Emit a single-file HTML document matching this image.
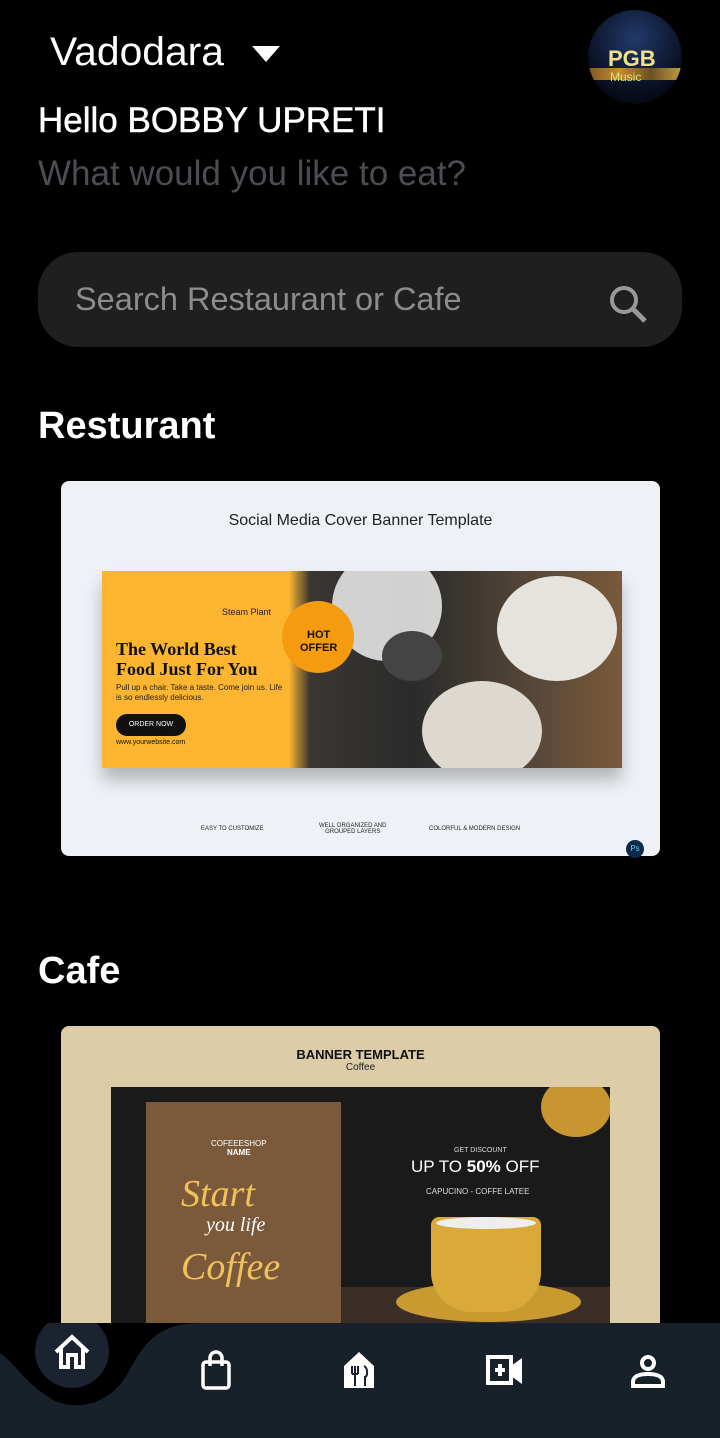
<!DOCTYPE html>
<html><head><meta charset="utf-8"><style>
*{margin:0;padding:0;box-sizing:border-box}
body{width:720px;height:1438px;background:#000;font-family:"Liberation Sans",sans-serif;position:relative;overflow:hidden;color:#fff}
.abs{position:absolute}
.t{white-space:nowrap;transform-origin:left top}
</style></head><body>
<div class="abs t" style="left:50px;top:30px;font-size:40px;transform:scaleX(1.02)">Vadodara</div>
<svg class="abs" style="left:252px;top:46px" width="28" height="18"><path d="M0 0H28L14 16Z" fill="#fff"/></svg>
<div class="abs" style="left:588px;top:10px;width:94px;height:94px;border-radius:50%;background:radial-gradient(circle at 50% 30%,#223a6a,#0b1226 60%,#000);overflow:hidden">
<div class="abs" style="left:0;top:58px;width:94px;height:12px;background:linear-gradient(90deg,#7a5a20,#c98c30,#6a5020,#c0a040)"></div>
<div class="abs" style="left:20px;top:36px;font-weight:bold;font-size:22px;color:#f1e28a">PGB</div>
<div class="abs" style="left:22px;top:60px;font-size:12px;color:#d8e47a">Music</div></div>
<div class="abs t" style="left:38px;top:101px;font-size:35px;-webkit-text-stroke:0.5px #fff">Hello BOBBY UPRETI</div>
<div class="abs t" style="left:38px;top:154px;font-size:35px;color:#4b4d52">What would you like to eat?</div>
<div class="abs" style="left:38px;top:252px;width:644px;height:95px;border-radius:40px;background:#1f1f1f"></div>
<div class="abs t" style="left:75px;top:281px;font-size:32.5px;color:#8c8c8c">Search Restaurant or Cafe</div>
<svg class="abs" style="left:606px;top:282px" width="44" height="44"><circle cx="18" cy="18" r="12" fill="none" stroke="#9a9a9a" stroke-width="4"/><path d="M27 27L39 39" stroke="#9a9a9a" stroke-width="5"/></svg>
<div class="abs t" style="left:38px;top:405px;font-size:38px;font-weight:bold">Resturant</div>
<div class="abs" style="left:61px;top:481px;width:599px;height:375px;border-radius:8px;background:#eef2f6">
<div class="abs" style="left:0;top:31px;width:599px;text-align:center;font-size:16px;color:#222">Social Media Cover Banner Template</div>
<div class="abs" style="left:41px;top:90px;width:520px;height:197px;background:linear-gradient(90deg,#fbb530 0 36%,#3a3632 40%,#2a2b2b 60%,#5b4a3a 85%,#7a5a3a);box-shadow:0 12px 16px rgba(0,0,0,.25);overflow:hidden">
<div class="abs" style="left:230px;top:-20px;width:110px;height:110px;border-radius:50%;background:#eee;opacity:.85"></div>
<div class="abs" style="left:395px;top:5px;width:120px;height:105px;border-radius:50%;background:#e6e2dc"></div>
<div class="abs" style="left:320px;top:110px;width:120px;height:100px;border-radius:50%;background:#ddd8d0"></div>
<div class="abs" style="left:280px;top:60px;width:60px;height:50px;border-radius:50%;background:#444"></div>
<div class="abs" style="left:180px;top:30px;width:72px;height:72px;border-radius:50%;background:#f59b10"></div>
<div class="abs" style="left:198px;top:58px;font-size:11px;font-weight:bold;color:#111;text-align:center;line-height:13px">HOT<br>OFFER</div>
<div class="abs" style="left:120px;top:36px;font-size:9px;color:#222">Steam Plant</div>
<div class="abs" style="left:14px;top:68px;font-family:'Liberation Serif',serif;font-weight:bold;font-size:18px;line-height:20px;color:#111">The World Best<br>Food Just For You</div>
<div class="abs" style="left:14px;top:112px;font-size:8px;color:#222;line-height:10px">Pull up a chair. Take a taste. Come join us. Life<br>is so endlessly delicious.</div>
<div class="abs" style="left:14px;top:143px;width:70px;height:22px;border-radius:11px;background:#111;color:#fff;font-size:7px;text-align:center;line-height:22px">ORDER NOW</div>
<div class="abs" style="left:14px;top:168px;font-size:7px;color:#111">www.yourwebsite.com</div></div>
<div class="abs" style="left:140px;top:345px;font-size:6px;color:#222">EASY TO CUSTOMIZE</div>
<div class="abs" style="left:258px;top:342px;font-size:6px;color:#222;text-align:center">WELL ORGANIZED AND<br>GROUPED LAYERS</div>
<div class="abs" style="left:368px;top:345px;font-size:6px;color:#222">COLORFUL &amp; MODERN DESIGN</div>
<div class="abs" style="left:565px;top:359px;width:18px;height:18px;border-radius:50%;background:#0b2a4a;color:#6cf;font-size:8px;text-align:center;line-height:18px">Ps</div>
</div>
<div class="abs t" style="left:38px;top:950px;font-size:38px;font-weight:bold">Cafe</div>
<div class="abs" style="left:61px;top:1026px;width:599px;height:310px;border-radius:8px 8px 0 0;background:#dccca8">
<div class="abs" style="left:0;top:21px;width:599px;text-align:center;font-size:13px;font-weight:bold;color:#111">BANNER TEMPLATE</div>
<div class="abs" style="left:0;top:36px;width:599px;text-align:center;font-size:10px;color:#222">Coffee</div>
<div class="abs" style="left:50px;top:61px;width:499px;height:240px;background:#1a1a1a;overflow:hidden">
<div class="abs" style="left:35px;top:15px;width:195px;height:230px;background:#7a5a3a"></div>
<div class="abs" style="left:100px;top:52px;font-size:8px;color:#fff;text-align:center">COFEEESHOP<br><b>NAME</b></div>
<div class="abs" style="left:70px;top:85px;font-family:'Liberation Serif',serif;font-style:italic;font-size:38px;color:#f1c15a">Start</div>
<div class="abs" style="left:95px;top:127px;font-family:'Liberation Serif',serif;font-style:italic;font-size:20px;color:#fff">you life</div>
<div class="abs" style="left:70px;top:158px;font-family:'Liberation Serif',serif;font-style:italic;font-size:38px;color:#f1c15a">Coffee</div>
<div class="abs" style="left:430px;top:-10px;width:70px;height:60px;border-radius:50%;background:#c89530"></div>
<div class="abs" style="left:343px;top:60px;font-size:7px;color:#ddd">GET DISCOUNT</div>
<div class="abs" style="left:300px;top:70px;font-size:17px;color:#fff">UP TO <b>50%</b> OFF</div>
<div class="abs" style="left:315px;top:100px;font-size:8px;color:#ddd">CAPUCINO - COFFE LATEE</div>
<div class="abs" style="left:230px;top:200px;width:269px;height:40px;background:#3a2e26"></div>
<div class="abs" style="left:285px;top:195px;width:185px;height:40px;border-radius:50%;background:#c89a30"></div>
<div class="abs" style="left:320px;top:130px;width:110px;height:95px;border-radius:8px 8px 40px 40px;background:#d9a93a"></div>
<div class="abs" style="left:325px;top:130px;width:100px;height:12px;border-radius:50%;background:#eee"></div>
</div></div>
<svg class="abs" style="left:0;top:1323px" width="720" height="115"><rect width="720" height="115" fill="#18202a"/><path d="M0 0H200C150 0 140 30 125 55C105 85 70 88 50 75C25 60 15 40 0 30Z" fill="#000"/><circle cx="72" cy="28" r="37" fill="#1b2330"/></svg>
<svg class="abs" style="left:52px;top:1333px" width="40" height="40" fill="none" stroke="#fff" stroke-width="4" stroke-linejoin="miter"><path d="M4 19L20 4L36 19M9 15V34H16V22H24V34H31V15"/></svg>
<svg class="abs" style="left:200px;top:1350px" width="32" height="40" fill="none" stroke="#fff" stroke-width="3.5"><rect x="3" y="12" width="26" height="26" rx="3"/><path d="M10 16V8A6 6 0 0 1 22 8V16"/></svg>
<svg class="abs" style="left:344px;top:1352px" width="32" height="36"><path d="M0 14L15 0L30 14V36H0Z" fill="#fff"/><path d="M8 14V22M11 14V34M14 14V22M8 22H14M20 14C24 16 24 24 21 25V34" stroke="#18202a" stroke-width="2" fill="none"/></svg>
<svg class="abs" style="left:486px;top:1355px" width="38" height="32"><rect x="2" y="2" width="23" height="26" fill="none" stroke="#fff" stroke-width="4"/><path d="M9 15H19M14 9V21" stroke="#fff" stroke-width="4"/><path d="M25 11L36 3V29L25 21Z" fill="#fff"/></svg>
<svg class="abs" style="left:630px;top:1354px" width="36" height="36" fill="none" stroke="#fff" stroke-width="4"><circle cx="18" cy="9" r="6"/><path d="M3 32V28C3 22 10 20 18 20C26 20 33 22 33 28V32Z"/></svg>
</body></html>
